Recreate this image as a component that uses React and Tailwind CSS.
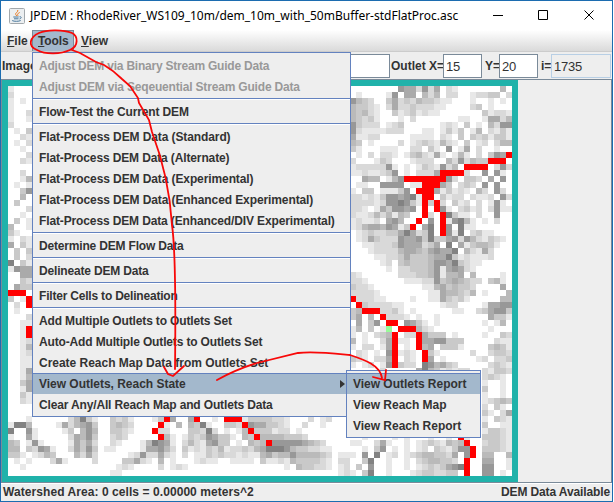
import React from "react";

const SHADES = {
  1: "#e8e8e8", 2: "#d9d9d9", 3: "#c9c9c9", 4: "#bababa", 5: "#aaaaaa",
  6: "#989898", 7: "#828282", R: "#ff0000", G: "#98fb98",
};

// Elevation cells, six pixels each. Every entry: first column, first row, rows of shades.
const BLOCKS = [
  [0, 0, [
    "1...", "2...", "1.1.", "1...", "1..2", "1..1", "2...", ".1.3", "..21", ".1.2",
    "..1.", "...2", "..21", "....", "..2.", "..14", ".1.1", "..36", "..4.", ".3..",
    "...2", "..1.", ".3.1", "4..1", "31..", "1.21", "5.31", ".3.3", ".3.2", "7.31",
    "1655", "..55", "..32", ".533", "RRR.", "3.1R", ".2.R", ".1..", "...2", "..11",
    "..1R", "..1R", "..12", "..14", "..12", "..11", "..11", "..15", "..14", "..35",
    "..15", "..31", "..21", "....", "....",
  ]],
  [57, 0, [
    "........6552625.21.......4.",
    ".1....16.55.424.22..12233.2",
    "6432..35232433211...1..1.1.",
    "43321.2522322211....23.1...",
    "43421..31231211.......31221",
    "43231...1.2.......11..15524",
    "63222.123......121.3.1.4266",
    "621111222...11.1313.14.2131",
    "51122.....1111.21.3.3231331",
    "43.1....2.12321421.3.12.244",
    "31...111..22.31.6.15.2..1..",
    ".1.2.221.1342151.141.2.365R",
    "2...132...1222..4262433RRR.",
    "12222261.1.1321624.RRRR.262",
    "11211236.1.2225RRRR2..6.61.",
    "..544.146RRRRRRR62.332.5.6.",
    ".11..6666.11RRR53.232.6.6..",
    "1.33.11136.RRR513121.42.62.",
    "221213665671RR.3122.2112.62",
    "222212667631R3R2.312.2.161.",
    "221.1536656.R.R61.2312.2611",
    "2112424143..R2.R7311.2..6..",
    "12112.564..R.6.R16741.1.2..",
    "1245546513R.57.R6.711......",
    ".1232233575237.R617.2311...",
    ".1253222655637335626421321.",
    "..1122236555235.7.5134431..",
    "...122224554356557.42152...",
    "....11223533345573121112...",
    ".....12.34333466573211.....",
    "......1.2233346156521......",
    "21......22233461445 4....1.",
    "221......1112263454322.341.",
    "3221........114534332....5.",
    "22221........11544324.1...4",
    "R22211....1..1153231.....44",
    ".R3222211......122....15566",
    "34RRR2231.1......11..235663",
    "35.4.R2221.1..1........5331",
    ".5.36.RR.6531.1.......1.14.",
    "14.3.1G.RRR421.........1...",
    "1.1.234R.22R5333.1....1..32",
    "4.1..25R11.R5566333.....211",
    "1.22.15R.1.R45.3331....3431",
    ".21.1.6R121.R31.....2..2332",
    "321.225R.21.R5 1.....12.223",
    "1.12.16R322 764532.....2321",
    ".....2.....574312122..21332",
    "......................2321.",
    "......................1..1.",
    "......................3..1.",
    "......................1..1.",
    "......................12343",
    "......................2.31.",
    "......................31.25",
    "......................1.321",
    "......................3..11",
    "......................13321",
    "..1....1.1...1..1.R1..33321",
    "11..251..1.12321434R..23321",
    "..1.36.1.1.12.321366R.33321",
    "1.6.7.12.123443325.6R.44..4",
    "..37..1..1.2344332.R..55..1",
    ".3.6..1..1.1232333567R66..1".slice(0, 16) + "567R..66..1",
    "1.37..1...12332233.R..66.1.",
  ]],
  [0, 55, [
    "...1......24731..3231...13R5" + "..5R..1.RRR13333221...2.12...",
    "1774....1524563..3432....R1." + "4.4371..332R6553321..2..1....",
    "7..61....13.464..3321...R22." + "..33272.1.14R333122.1........",
    "1..51.....25463..232.....R41" + ".132365331.43R44443332.......",
    "43.161....15352..21...147651" + ".24215633 1.434R666665432....",
    "44.32651..25363.11....155642" + ".3121324122324577764332211...",
    "331.1243...4252.....12622521" + ".2.11323221211453446444432.11",
    ".1.1...251....2....33521.4.1" + "...1211..1111.311214333321.22",
    "..1...............121....2.1" + "21................1.433221.12",
    ".................11........." + "...........................12",
  ]],
];

function ElevationMap() {
  return (
    <svg className="block bg-white" width="504" height="390" shapeRendering="crispEdges">
      {BLOCKS.map(([c0, r0, rows]) =>
        rows.map((row, r) =>
          [...row].map((ch, c) =>
            SHADES[ch] ? (
              <rect key={`${c0}-${r}-${c}`} x={(c0 + c) * 6} y={(r0 + r) * 6} width="6" height="6" fill={SHADES[ch]} />
            ) : null
          )
        )
      )}
    </svg>
  );
}

const WIDE = "tracking-[-0.22px]";
const MID = "tracking-[-0.13px]";
const NONE = "tracking-[-0.02px]";

const GROUPS = [
  [
    ["Adjust DEM via Binary Stream Guide Data", WIDE],
    ["Adjust DEM via Seqeuential Stream Guide Data", "tracking-[-0.18px]"],
  ],
  [["Flow-Test the Current DEM", MID]],
  [
    ["Flat-Process DEM Data (Standard)", "tracking-[-0.1px]"],
    ["Flat-Process DEM Data (Alternate)", MID],
    ["Flat-Process DEM Data (Experimental)", "tracking-[-0.1px]"],
    ["Flat-Process DEM Data (Enhanced Experimental)", "tracking-[-0.1px]"],
    ["Flat-Process DEM Data (Enhanced/DIV Experimental)", MID],
  ],
  [["Determine DEM Flow Data", "tracking-[-0.18px]"]],
  [["Delineate DEM Data", "tracking-[-0.18px]"]],
  [["Filter Cells to Delineation", "tracking-[-0.2px]"]],
  [
    ["Add Multiple Outlets to Outlets Set", "tracking-[-0.15px]"],
    ["Auto-Add Multiple Outlets to Outlets Set", "tracking-[-0.15px]"],
    ["Create Reach Map Data from Outlets Set", NONE],
    ["View Outlets, Reach State", NONE],
    ["Clear Any/All Reach Map and Outlets Data", "tracking-[-0.15px]"],
  ],
];

function Item({ label, tracking = NONE, disabled, active, arrow }) {
  return (
    <div
      className={`flex h-[21px] items-center justify-between whitespace-nowrap border-t pl-[6px] pr-[5px] ${
        disabled ? "text-[#999999]" : "text-[#333333]"
      } ${active ? "border-[#6382bf] bg-[#a3b8cc]" : "border-transparent"}`}
    >
      <span className={tracking}>{label}</span>
      {arrow && (
        <svg width="5" height="8" viewBox="0 0 5 8"><path d="M0 0L5 4L0 8Z" fill="#333" /></svg>
      )}
    </div>
  );
}

function ToolsMenu() {
  return (
    <div className="absolute left-[32px] top-[52px] h-[365px] w-[319px] border border-[#6382bf] bg-[#eeeeee] pt-[2px]">
      {GROUPS.map((group, g) => (
        <div key={g}>
          {g > 0 && (
            <div className="h-[4px] pt-px">
              <div className="h-[2px] border-t border-[#6382bf] bg-white" />
            </div>
          )}
          {group.map(([label, tracking]) => (
            <Item
              key={label}
              label={label}
              tracking={tracking}
              disabled={g === 0}
              active={label === "View Outlets, Reach State"}
              arrow={label === "View Outlets, Reach State"}
            />
          ))}
        </div>
      ))}
    </div>
  );
}

function Submenu() {
  return (
    <div className="absolute left-[346px] top-[370px] h-[68px] w-[135px] border border-[#6382bf] bg-[#eeeeee] pt-[2px]">
      <Item label="View Outlets Report" active />
      <Item label="View Reach Map" />
      <Item label="View Reach Report" />
    </div>
  );
}

function Field({ value, className }) {
  return (
    <div className={`flex h-[24px] items-center border pl-[2px] pt-px text-[13px] font-normal tracking-[-0.2px] ${className}`}>{value}</div>
  );
}

export default function App() {
  return (
    <div className="relative h-[502px] w-[614px] overflow-hidden bg-white font-['Liberation_Sans',Arial,sans-serif] text-[12px] font-bold leading-[15px] text-[#333333]">
      <div className="flex h-[502px] w-[613px] flex-col border border-[#1c6cb0] bg-[#eeeeee]">
        <header className="flex h-[29px] items-center bg-white pl-[8px] font-['Noto_Sans','Open_Sans',sans-serif] font-normal text-black">
          <svg width="16" height="16" viewBox="0 0 16 16" fill="none">
            <rect x="0.5" y="0.5" width="15" height="15" rx="1" fill="#eceff1" stroke="#a2a8ac" />
            <path d="M8.8 2C9.5 4 6 4.8 6.7 6.4L7.7 8M10.7 4.5C8 5.8 8.5 6.5 9 8" stroke="#e87820" />
            <path d="M4.3 9H9.7M5 10.8H9.5M10.5 8.8C13 8.3 12.5 10.5 10.5 11M3.2 12.6C5 13.6 10 13.5 11.7 12.5" stroke="#49789d" />
          </svg>
          <span className="ml-[5px] whitespace-nowrap">JPDEM : RhodeRiver_WS109_10m/dem_10m_with_50mBuffer-stdFlatProc.asc</span>
          <svg className="ml-auto mr-[17px]" width="102" height="12" viewBox="0 0 102 12" fill="none" stroke="black">
            <path d="M0 5.5H10M45.5 0.5H54.5V9.5H45.5ZM91.5 0.5L100.5 9.5M100.5 0.5L91.5 9.5" />
          </svg>
        </header>
        <nav className="flex h-[22px] items-stretch border-b border-[#cccccc] bg-gradient-to-b from-white to-[#dadada]">
          <span className="flex w-[31px] items-center pl-[6px] pt-[2px]"><span><u>F</u>ile</span></span>
          <span className="flex w-[42px] items-center border-x border-t border-[#7a8a99] bg-[#a3b8cc] pl-[5px] pt-px tracking-[-0.1px]"><span><u>T</u>ools</span></span>
          <span className="flex items-center pl-[7px] pt-[2px]"><span><u>V</u>iew</span></span>
        </nav>
        <div className="flex h-[27px] items-center pl-px">
          <span className="w-[40px] pt-px">Image</span>
          <Field className="w-[348px] border-[#7a8a99] bg-white" />
          <span className="w-[53px] whitespace-nowrap pl-px pt-px">Outlet X=</span>
          <Field value="15" className="w-[39px] border-[#7a8a99] bg-white" />
          <span className="w-[17px] pl-[3px] pt-px">Y=</span>
          <Field value="20" className="w-[39px] border-[#7a8a99] bg-white" />
          <span className="w-[13px] pl-[3px] pt-px">i=</span>
          <Field value="1735" className="w-[60px] border-[#b8cfe5]" />
        </div>
        <main className="h-[404px] border border-[#7a8a99]">
          <div className="h-[402px] w-[516px] border-6 border-[#20b2aa]"><ElevationMap /></div>
        </main>
        <footer className="flex flex-1 items-center justify-between border-t border-white pl-[2px] pr-[2px]">
          <span className="tracking-[0.07px]">Watershed Area: 0 cells = 0.00000 meters^2</span>
          <span className="tracking-[-0.12px]">DEM Data Available</span>
        </footer>
      </div>
      <ToolsMenu />
      <Submenu />
      <svg className="absolute inset-0" width="614" height="502" fill="none" stroke="#f80808" strokeWidth="1.8" strokeLinecap="round">
        <path d="M39 33C30 37 27 46 37 50C46 55 61 54 70 50C79 46 78 36 72 33C64 30 48 29 39 33" />
        <path d="M72 50L80 53L96 62L104 65C111 69 117 74 122 79L130 86L138 98L139 103L149 120L152 132C163 161 170 190 172 225C175 246 176 285 175 369M164 367L168 374L173 376L184 366" />
        <path d="M217 380C226 375 241 368 257 363L298 353C313 351 330 353 350 355C365 360 380 365 382 378M386 370L385 380L373 377" />
      </svg>
    </div>
  );
}
